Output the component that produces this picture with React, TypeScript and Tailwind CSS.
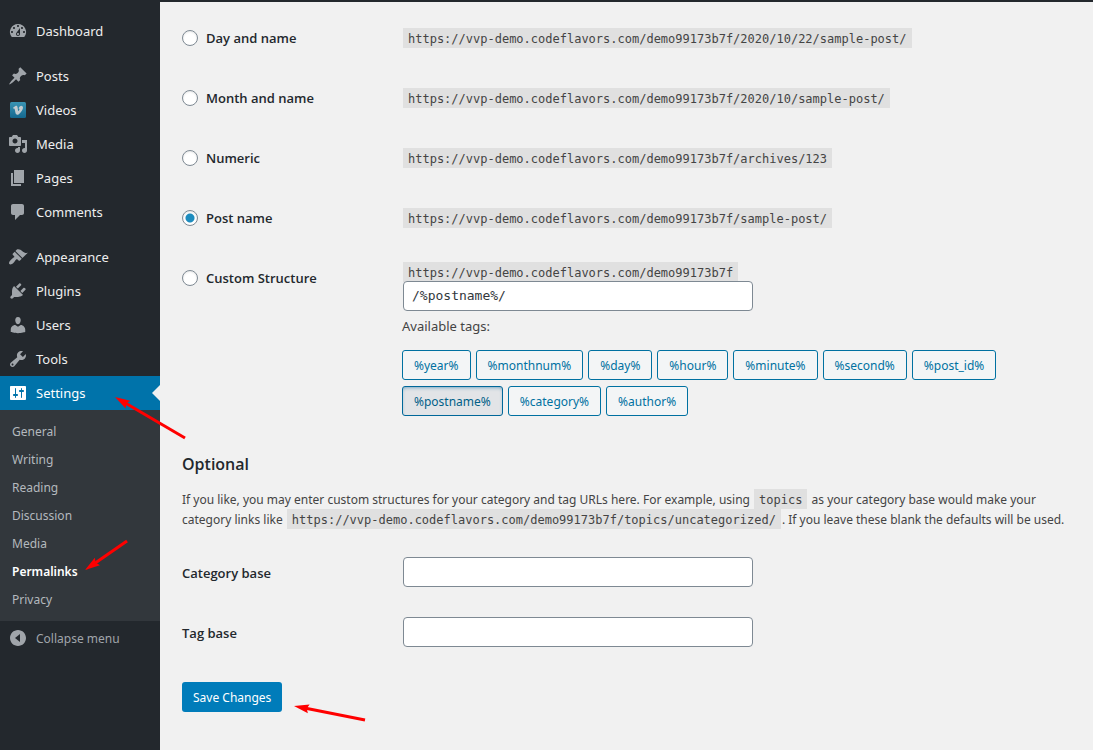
import React, { useState } from "react";

interface MenuItem {
  label: string;
  icon: React.ReactNode;
}

interface Structure {
  id: string;
  label: string;
  url: string;
}

const BASE_URL = "https://vvp-demo.codeflavors.com/demo99173b7f";

const Dashicon: React.FC<{ d: string }> = ({ d }) => (
  <svg viewBox="0 0 20 20" className="w-5 h-5 shrink-0" fill="currentColor" aria-hidden="true">
    <path fillRule="evenodd" d={d} />
  </svg>
);

const VimeoIcon: React.FC = () => (
  <svg viewBox="0 0 20 20" className="w-5 h-5 shrink-0" aria-hidden="true">
    <defs>
      <linearGradient id="vimeo-bg" x1="0" y1="0" x2="0" y2="1">
        <stop offset="0" stopColor="#3a94b3" />
        <stop offset="1" stopColor="#14688f" />
      </linearGradient>
    </defs>
    <rect x="2" y="2" width="16" height="16" rx="1.5" fill="url(#vimeo-bg)" />
    <path
      fill="#c3ccd0"
      d="M5 7.8 7.4 6C8.700 5.400 9.400 6.200 9.600 7.400L10 10.200C10.200 11.300 10.600 11.200 11.200 10C11.700 9 11.500 8.500 10.600 8.700C11.200 6.700 12.300 5.700 13.700 5.900C15 6.100 15.300 7.300 14.700 8.900C13.800 11.300 11.300 14.600 9.400 14.800C8.200 14.900 7.700 14 7.400 12.600L6.700 9.300C6.500 8.400 6.200 8.300 5.500 8.700Z"
    />
  </svg>
);

const dashboardItem: MenuItem = {
  label: "Dashboard",
  icon: (
    <Dashicon d="M3.76 16h12.48A7.998 7.998 0 0 0 10 3a7.998 7.998 0 0 0-6.24 13zM10 4c.55 0 1 .45 1 1s-.45 1-1 1-1-.45-1-1 .45-1 1-1zM6 6c.55 0 1 .45 1 1s-.45 1-1 1-1-.45-1-1 .45-1 1-1zm8 0c.55 0 1 .45 1 1s-.45 1-1 1-1-.45-1-1 .45-1 1-1zm-5.37 5.55L12 7v6c0 1.1-.9 2-2 2s-2-.9-2-2c0-.57.24-1.08.63-1.45zM4 10c.55 0 1 .45 1 1s-.45 1-1 1-1-.45-1-1 .45-1 1-1zm12 0c.55 0 1 .45 1 1s-.45 1-1 1-1-.45-1-1 .45-1 1-1zm-5 3c0-.55-.45-1-1-1s-1 .45-1 1 .45 1 1 1 1-.45 1-1z" />
  ),
};

const contentItems: MenuItem[] = [
  {
    label: "Posts",
    icon: (
      <Dashicon d="M10.44 3.02l1.82-1.82 6.36 6.35-1.83 1.82c-1.05-.68-2.48-.57-3.41.36l-.75.75c-.92.93-1.04 2.35-.35 3.41l-1.83 1.82-2.41-2.41-2.8 2.79c-.42.42-3.38 2.71-3.8 2.29s1.86-3.39 2.28-3.81l2.79-2.79L4.1 9.36l1.83-1.82c1.05.69 2.48.57 3.4-.36l.75-.75c.93-.92 1.05-2.35.36-3.41z" />
    ),
  },
  { label: "Videos", icon: <VimeoIcon /> },
  {
    label: "Media",
    icon: (
      <Dashicon d="M13 11V4c0-.55-.45-1-1-1h-1.67L9 1H5L3.67 3H2c-.55 0-1 .45-1 1v7c0 .55.45 1 1 1h10c.55 0 1-.45 1-1zM7 4.5c1.38 0 2.5 1.12 2.5 2.5S8.38 9.5 7 9.5 4.5 8.38 4.5 7 5.62 4.5 7 4.5zM14 6h5v10.5c0 1.38-1.12 2.5-2.5 2.5S14 17.88 14 16.5s1.12-2.5 2.5-2.5c.17 0 .34.02.5.05V9h-3V6zm-4 8.05V13h2v3.5c0 1.38-1.12 2.5-2.5 2.5S7 17.88 7 16.5 8.12 14 9.5 14c.17 0 .34.02.5.05z" />
    ),
  },
  { label: "Pages", icon: <Dashicon d="M6 15V2h10v13H6zm-1 1h8v2H3V5h2v11z" /> },
  {
    label: "Comments",
    icon: (
      <Dashicon d="M5 2h9c1.1 0 2 .9 2 2v7c0 1.1-.9 2-2 2h-2l-5 5v-5H5c-1.1 0-2-.9-2-2V4c0-1.1.9-2 2-2z" />
    ),
  },
];

const adminItems: MenuItem[] = [
  {
    label: "Appearance",
    icon: (
      <Dashicon d="M14.48 11.06L7.41 3.99l1.5-1.5c.5-.56 2.3-.47 3.51.32 1.21.8 1.43 1.28 2.91 2.1 1.18.64 2.45 1.26 4.45.85zm-.71.71L6.7 4.7 4.93 6.47c-.39.39-.39 1.02 0 1.41l1.06 1.06c.39.39.39 1.03 0 1.42-.6.6-1.43 1.11-2.21 1.69-.35.26-.7.53-1.01.84C1.43 14.23.4 16.08 1.4 17.07c.99 1 2.84-.03 4.18-1.36.31-.31.58-.66.85-1.02.57-.78 1.08-1.61 1.69-2.21.39-.39 1.02-.39 1.41 0l1.06 1.06c.39.39 1.02.39 1.41 0z" />
    ),
  },
  {
    label: "Plugins",
    icon: (
      <Dashicon d="M13.11 4.36L9.87 7.6 8 5.73l3.24-3.24c.35-.34 1.05-.2 1.56.32.52.51.66 1.21.31 1.55zm-8 1.77l.91-1.12 9.01 9.01-1.19.84c-.71.71-2.63 1.16-3.82 1.16H6.14L4.9 17.26c-.59.59-1.54.59-2.12 0-.59-.58-.59-1.53 0-2.12l1.24-1.24v-3.88c0-1.13.4-3.19 1.09-3.89zm7.26 3.97l3.24-3.24c.34-.35 1.04-.21 1.55.31.52.51.66 1.21.31 1.55l-3.24 3.25z" />
    ),
  },
  {
    label: "Users",
    icon: (
      <Dashicon d="M10 9.25c-2.27 0-2.73-3.44-2.73-3.44C7 4.02 7.82 2 9.97 2c2.16 0 2.98 2.02 2.71 3.81 0 0-.41 3.44-2.68 3.44zm0 2.57L12.72 10c2.39 0 4.52 2.33 4.52 4.53v2.49s-3.65 1.13-7.24 1.13c-3.65 0-7.24-1.13-7.24-1.13v-2.49c0-2.25 1.94-4.48 4.47-4.48z" />
    ),
  },
  {
    label: "Tools",
    icon: (
      <Dashicon d="M16.68 9.77c-1.34 1.34-3.3 1.67-4.95.99l-5.41 6.52c-.99.99-2.59.99-3.58 0s-.99-2.59 0-3.57l6.52-5.42c-.68-1.65-.35-3.61.99-4.95 1.28-1.28 3.12-1.62 4.72-1.06l-2.89 2.89 2.82 2.82 2.86-2.87c.53 1.58.18 3.39-1.08 4.65zM3.81 16.21c.4.39 1.04.39 1.43 0 .4-.4.4-1.04 0-1.43-.39-.4-1.03-.4-1.43 0-.39.39-.39 1.03 0 1.43z" />
    ),
  },
];

const settingsItems = [
  "General",
  "Writing",
  "Reading",
  "Discussion",
  "Media",
  "Permalinks",
  "Privacy",
];

const structures: Structure[] = [
  { id: "day", label: "Day and name", url: `${BASE_URL}/2020/10/22/sample-post/` },
  { id: "month", label: "Month and name", url: `${BASE_URL}/2020/10/sample-post/` },
  { id: "numeric", label: "Numeric", url: `${BASE_URL}/archives/123` },
  { id: "postname", label: "Post name", url: `${BASE_URL}/sample-post/` },
];

const tags = [
  "%year%",
  "%monthnum%",
  "%day%",
  "%hour%",
  "%minute%",
  "%second%",
  "%post_id%",
  "%postname%",
  "%category%",
  "%author%",
];

const MenuLink: React.FC<MenuItem & { current?: boolean }> = ({ label, icon, current }) => (
  <a
    href="#"
    className={`relative flex items-center gap-2 h-[34px] pl-2 text-[13px] ${
      current ? "bg-[#0073aa] text-white" : "text-[#eeeeee] hover:text-[#00b9eb]"
    }`}
  >
    <span className={current ? "text-white" : "text-[#a0a5aa]"}>{icon}</span>
    <span className="pt-0.5">{label}</span>
    {current && (
      <span className="absolute right-0 top-1/2 -translate-y-1/2 border-8 border-transparent border-r-[#f1f1f1]" />
    )}
  </a>
);

const Sidebar: React.FC = () => (
  <nav className="w-40 shrink-0 bg-[#23282d] pt-3" aria-label="Main menu">
    <MenuLink {...dashboardItem} />
    <div className="pt-[11px]">
      {contentItems.map((item) => (
        <MenuLink key={item.label} {...item} />
      ))}
    </div>
    <div className="pt-[11px]">
      {adminItems.map((item) => (
        <MenuLink key={item.label} {...item} />
      ))}
      <MenuLink
        current
        label="Settings"
        icon={
          <Dashicon d="M18 16V4c0-.55-.45-1-1-1H3c-.55 0-1 .45-1 1v12c0 .55.45 1 1 1h14c.55 0 1-.45 1-1zM8 11h1c.55 0 1 .45 1 1s-.45 1-1 1H8v1.5c0 .28-.22.5-.5.5s-.5-.22-.5-.5V13H6c-.55 0-1-.45-1-1s.45-1 1-1h1V5.5c0-.28.22-.5.5-.5s.5.22.5.5V11zm5-2h-1c-.55 0-1-.45-1-1s.45-1 1-1h1V5.5c0-.28.22-.5.5-.5s.5.22.5.5V7h1c.55 0 1 .45 1 1s-.45 1-1 1h-1v5.5c0 .28-.22.5-.5.5s-.5-.22-.5-.5V9z" />
        }
      />
    </div>
    <ul className="bg-[#32373c] pt-2 pb-[7px]">
      {settingsItems.map((label) => (
        <li key={label}>
          <a
            href="#"
            className={`flex items-center h-7 pl-3 text-[12px] ${
              label === "Permalinks" ? "font-semibold text-white" : "text-[#b4b9be]"
            }`}
          >
            {label}
          </a>
        </li>
      ))}
    </ul>
    <button
      type="button"
      className="flex items-center gap-2 w-full h-[34px] pl-2 text-[12px] text-[#a0a5aa]"
    >
      <Dashicon d="M10 2c4.42 0 8 3.58 8 8s-3.58 8-8 8-8-3.58-8-8 3.58-8 8-8zm2 12V6l-5 4z" />
      <span className="pt-0.5">Collapse menu</span>
    </button>
  </nav>
);

const Code: React.FC<{ children: React.ReactNode }> = ({ children }) => (
  <code className="mx-px bg-[#e0e0e0] px-[5px] pt-1 pb-0.5 font-['DejaVu_Sans_Mono',monospace] text-[12px] text-[#444444]">
    {children}
  </code>
);

const StructureRadio: React.FC<{
  id: string;
  label: string;
  checked: boolean;
  onSelect: (id: string) => void;
}> = ({ id, label, checked, onSelect }) => (
  <label className="flex items-center gap-2 h-5 font-['Open_Sans',sans-serif] text-[13px] font-semibold text-[#23282d]">
    <input
      type="radio"
      name="structure"
      value={id}
      checked={checked}
      onChange={() => onSelect(id)}
      className="appearance-none w-4 h-4 rounded-full border border-[#7e8993] bg-white shadow-[inset_0_1px_2px_rgba(0,0,0,0.1)] checked:bg-[radial-gradient(circle,#1e8cbe_4px,#ffffff_5px)]"
    />
    <span className="pt-0.5">{label}</span>
  </label>
);

const inputClass =
  "block mx-px w-[350px] max-w-full h-[30px] rounded border border-[#7e8993] bg-white px-2 pb-0.5 font-['DejaVu_Sans_Mono',monospace] text-[13px] text-[#32373c]";

const labelClass = "pt-1 font-['Open_Sans',sans-serif] text-[13px] font-semibold text-[#23282d]";

// Red pointer; coordinates are tip first, then tail
const Arrow: React.FC<{ x1: number; y1: number; x2: number; y2: number }> = ({
  x1,
  y1,
  x2,
  y2,
}) => {
  const angle = (Math.atan2(y2 - y1, x2 - x1) * 180) / Math.PI;
  const length = Math.hypot(x2 - x1, y2 - y1);
  return (
    <g transform={`translate(${x1} ${y1}) rotate(${angle})`}>
      <path d="M0 0 15-4.500 13 0 15 4.500z" fill="#ff0000" />
      <path d={`M12 0H${length}`} stroke="#ff0000" strokeWidth="3" />
    </g>
  );
};

const App: React.FC = () => {
  const [selected, setSelected] = useState("postname");
  const [custom, setCustom] = useState("/%postname%/");

  return (
    <div className="relative flex flex-col min-h-screen bg-[#f1f1f1] font-['Noto_Sans',sans-serif] text-[12px] text-[#444444]">
      <div className="h-[2px] bg-[#23282d]" />
      <div className="flex grow">
        <Sidebar />

        <main className="grow min-w-0 pl-[22px] pr-5 pt-[26px] pb-9">
          <form onSubmit={(e) => e.preventDefault()}>
            {structures.map((s) => (
              <div key={s.id} className="grid grid-cols-[220px_1fr] items-center h-5 mb-10">
                <StructureRadio
                  id={s.id}
                  label={s.label}
                  checked={selected === s.id}
                  onSelect={setSelected}
                />
                <div className="pt-0.5">
                  <Code>{s.url}</Code>
                </div>
              </div>
            ))}

            <div className="grid grid-cols-[220px_1fr] items-start">
              <StructureRadio
                id="custom"
                label="Custom Structure"
                checked={selected === "custom"}
                onSelect={setSelected}
              />
              <div className="-mt-[5px]">
                <div className="h-[18px] leading-5">
                  <Code>{BASE_URL}</Code>
                </div>
                <input
                  type="text"
                  aria-label="Custom structure"
                  value={custom}
                  onChange={(e) => setCustom(e.target.value)}
                  className={`relative ${inputClass}`}
                />
                <p className="mt-[5px] text-[13px] leading-5">Available tags:</p>
                <div className="flex flex-wrap gap-x-[5px] gap-y-[6px] mt-[14px]">
                  {tags.map((tag) => {
                    const active = custom.includes(tag);
                    return (
                      <button
                        key={tag}
                        type="button"
                        aria-pressed={active}
                        className={`h-[30px] px-[11px] pt-0.5 rounded-[3px] border text-[12px] ${
                          active
                            ? "border-[#006799] bg-[#e2e4e7] text-[#016087] shadow-[inset_0_2px_5px_-3px_#006799]"
                            : "border-[#0071a1] bg-[#f3f5f6] text-[#0071a1]"
                        }`}
                      >
                        {tag}
                      </button>
                    );
                  })}
                </div>
              </div>
            </div>

            <h2 className="mt-[38px] font-['Open_Sans',sans-serif] text-[16px] leading-5 font-semibold text-[#23282d]">
              Optional
            </h2>
            <p className="mt-4 leading-5">
              If you like, you may enter custom structures for your category and tag URLs here. For
              example, using <Code>topics</Code> as your category base would make your category
              links like <Code>{BASE_URL}/topics/uncategorized/</Code>. If you leave these blank the
              defaults will be used.
            </p>

            <div className="grid grid-cols-[220px_1fr] items-center mt-[27px]">
              <label htmlFor="category-base" className={labelClass}>
                Category base
              </label>
              <input id="category-base" type="text" className={inputClass} />
            </div>
            <div className="grid grid-cols-[220px_1fr] items-center mt-[30px]">
              <label htmlFor="tag-base" className={labelClass}>
                Tag base
              </label>
              <input id="tag-base" type="text" className={inputClass} />
            </div>

            <button
              type="submit"
              className="mt-[35px] h-[30px] px-[11px] pt-0.5 rounded-[3px] bg-[#007cba] text-[12px] text-white"
            >
              Save Changes
            </button>
          </form>
        </main>
      </div>

      <svg
        width="400"
        height="750"
        className="absolute left-0 top-0 pointer-events-none"
        aria-hidden="true"
      >
        <Arrow x1={115} y1={397} x2={185} y2={438} />
        <Arrow x1={85} y1={570} x2={127} y2={541} />
        <Arrow x1={294} y1={706} x2={365} y2={720} />
      </svg>
    </div>
  );
};

export default App;
